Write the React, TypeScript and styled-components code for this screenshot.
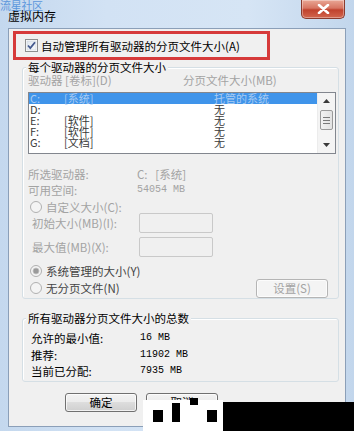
import React from 'react';
import styled, { createGlobalStyle } from 'styled-components';

const GlobalStyle = createGlobalStyle`
  html, body {
    margin: 0;
    padding: 0;
    background: #ffffff;
  }
  body {
    font-family: "Noto Sans CJK SC", "Liberation Sans", sans-serif;
    font-size: 11.5px;
    color: #000;
  }
`;

const Window = styled.div`
  position: relative;
  width: 354px;
  height: 431px;
  box-sizing: border-box;
  padding: 0 8px 4px 8px;
  background: linear-gradient(90deg, #c4d8ee 0%, #d2e2f4 30%, #d6e5f5 70%, #c2d6ec 100%);
  display: flex;
  flex-direction: column;
  overflow: hidden;
`;

const TitleBar = styled.div`
  height: 28px;
  flex: none;
  display: flex;
  justify-content: space-between;
  align-items: flex-start;
`;

const Title = styled.div`
  font-size: 12px;
  line-height: 14px;
  padding-top: 9px;
  color: #000;
`;

const CloseButton = styled.div`
  width: 44px;
  height: 19px;
  margin-right: 1px;
  box-sizing: border-box;
  border: 1px solid #8a3b2e;
  border-top: none;
  border-radius: 0 0 5px 5px;
  background: linear-gradient(180deg, #e9a795 0%, #d77562 45%, #c0422d 55%, #d2664e 100%);
  display: flex;
  align-items: center;
  justify-content: center;
  box-shadow: inset 0 0 0 1px rgba(255, 255, 255, 0.35);
`;

const Watermark = styled.div`
  position: absolute;
  left: 0;
  top: 0;
  font-size: 11px;
  line-height: 10px;
  color: #3f86d8;
  opacity: 0.8;
  letter-spacing: -0.3px;
`;

const Client = styled.div`
  flex: 1;
  min-height: 0;
  background: #f0f0f0;
  border: 1px solid #8b9fb8;
  display: flex;
  flex-direction: column;
`;

const Highlight = styled.div`
  margin: 2px 0 0 4px;
  width: 257px;
  height: 29px;
  box-sizing: border-box;
  border: 3px solid #d63a3a;
  display: flex;
  align-items: center;
  gap: 3px;
  padding-left: 9px;
  line-height: 14px;
`;

const Group = styled.div<{ $top: number }>`
  margin: ${p => p.$top}px 6px 0 13px;
  border: 1px solid #d5dfe5;
  border-radius: 3px;
  box-shadow: inset 1px 1px 0 #ffffff;
  display: flex;
  flex-direction: column;
  padding: 0 0 1px 5px;
`;

const GroupTitle = styled.div`
  align-self: flex-start;
  margin: -7px 0 0 -2px;
  padding: 0 2px;
  line-height: 12px;
  background: #f0f0f0;
  color: #000;
`;

const Columns = styled.div<{ $first: number; $height: number }>`
  display: grid;
  grid-template-columns: ${p => p.$first}px auto;
  line-height: ${p => p.$height}px;
`;

const Dim = styled.span`
  color: #a3a3a3;
`;

const Mono = styled.span<{ $dim?: boolean }>`
  font-family: "Liberation Mono", "Noto Sans CJK SC", monospace;
  font-size: 10px;
  color: ${p => (p.$dim ? '#a3a3a3' : '#000')};
`;

const ListBox = styled.div`
  margin-top: 5px;
  width: 308px;
  height: 62px;
  box-sizing: border-box;
  border: 1px solid #82868e;
  background: #ffffff;
  display: flex;
`;

const Rows = styled.div`
  flex: 1;
`;

const Row = styled.div<{ $selected?: boolean }>`
  display: grid;
  grid-template-columns: 34px 150px 1fr;
  height: 11px;
  line-height: 11px;
  font-size: 11px;
  padding-left: 1px;
  background: ${p => (p.$selected ? '#3f94ea' : 'transparent')};
  color: ${p => (p.$selected ? '#a9cbf2' : '#3a3a3a')};
`;

const ScrollBar = styled.div`
  width: 17px;
  display: flex;
  flex-direction: column;
  align-items: center;
  background: #f4f4f4;
  border-left: 1px solid #ececec;
`;

const Arrow = styled.div`
  height: 16px;
  display: flex;
  align-items: center;
  justify-content: center;
`;

const Thumb = styled.div`
  width: 13px;
  height: 20px;
  margin-top: 1px;
  box-sizing: border-box;
  border: 1px solid #9a9a9a;
  border-radius: 2px;
  background: linear-gradient(90deg, #f2f2f2, #e2e2e2);
  display: flex;
  flex-direction: column;
  align-items: center;
  justify-content: center;
  gap: 2px;
`;

const Grip = styled.div`
  width: 7px;
  height: 1px;
  background: #7a7a7a;
`;

const Spacer = styled.div`
  flex: 1;
`;

const Info = styled(Columns)`
  margin-top: 12px;
  color: #a3a3a3;
`;

const RadioRow = styled.div<{ $top: number; $height: number; $dim?: boolean }>`
  margin-top: ${p => p.$top}px;
  height: ${p => p.$height}px;
  display: flex;
  align-items: center;
  gap: 4px;
  padding-left: 2px;
  color: ${p => (p.$dim ? '#a3a3a3' : '#444')};
`;

const FieldRow = styled.div<{ $top: number }>`
  margin-top: ${p => p.$top}px;
  height: 20px;
  display: flex;
  align-items: center;
  padding-left: 4px;
  color: #a3a3a3;
`;

const FieldLabel = styled.div`
  width: 107px;
`;

const Field = styled.div`
  width: 74px;
  height: 20px;
  box-sizing: border-box;
  border: 1px solid #c9c9c9;
  border-radius: 2px;
  background: #f0f0f0;
`;

const LastRow = styled.div`
  height: 18px;
  display: flex;
  align-items: center;
  justify-content: space-between;
  padding: 0 10px 0 2px;
  color: #444;
`;

const RadioLabel = styled.div`
  display: flex;
  align-items: center;
  gap: 4px;
`;

const Button = styled.div<{ $disabled?: boolean }>`
  width: 72px;
  height: 19px;
  box-sizing: border-box;
  border: 1px solid ${p => (p.$disabled ? '#b5b5b5' : '#707070')};
  border-radius: 3px;
  background: ${p =>
    p.$disabled
      ? '#f4f4f4'
      : 'linear-gradient(180deg, #f3f3f3 0%, #ebebeb 49%, #dddddd 50%, #cfcfcf 100%)'};
  box-shadow: inset 0 0 0 1px rgba(255, 255, 255, 0.7);
  display: flex;
  align-items: center;
  justify-content: center;
  line-height: 14px;
  color: ${p => (p.$disabled ? '#a3a3a3' : '#000')};
`;

const TotalRows = styled(Columns)`
  margin-top: 6px;
  padding-left: 3px;
`;

const ButtonBar = styled.div`
  margin: 11px 0 0 56px;
  display: flex;
  gap: 9px;
`;

const Redaction = styled.div<{ $l: number; $t: number; $w: number; $h: number; $c: string }>`
  position: absolute;
  left: ${p => p.$l}px;
  top: ${p => p.$t}px;
  width: ${p => p.$w}px;
  height: ${p => p.$h}px;
  background: ${p => p.$c};
`;

const CheckBox = () => (
  <svg width="13" height="13" viewBox="0 0 13 13">
    <defs>
      <linearGradient id="cb" x1="0" y1="0" x2="1" y2="1">
        <stop offset="0" stopColor="#dfe6ee" />
        <stop offset="1" stopColor="#f7f9fb" />
      </linearGradient>
    </defs>
    <rect x="0.5" y="0.5" width="12" height="12" fill="#fff" stroke="#8e8f8f" />
    <rect x="2" y="2" width="9" height="9" fill="url(#cb)" stroke="#c8d0d9" strokeWidth="0.6" />
    <path d="M3 6.5 L5.3 9 L10 3.2" fill="none" stroke="#44598e" strokeWidth="1.8" />
  </svg>
);

const Radio = ({ checked }: { checked?: boolean }) => (
  <svg width="12" height="12" viewBox="0 0 12 12">
    <circle cx="6" cy="6" r="5.5" fill="#f4f4f4" stroke="#b0b0b0" />
    {checked && <circle cx="6" cy="6" r="3" fill="#9a9a9a" stroke="#c4c4c4" strokeWidth="0.8" />}
  </svg>
);

const Tri = ({ up }: { up?: boolean }) => (
  <svg width="7" height="4" viewBox="0 0 7 4">
    <path d={up ? 'M0 4 L3.5 0 L7 4 Z' : 'M0 0 L3.5 4 L7 0 Z'} fill="#3a3a3a" />
  </svg>
);

const drives = [
  { d: 'C:', label: '[系统]', size: '托管的系统', selected: true },
  { d: 'D:', label: '', size: '无' },
  { d: 'E:', label: '[软件]', size: '无' },
  { d: 'F:', label: '[软件]', size: '无' },
  { d: 'G:', label: '[文档]', size: '无' },
];

export default function App() {
  return (
    <Window>
      <GlobalStyle />
      <TitleBar>
        <Title>虚拟内存</Title>
        <CloseButton>
          <svg width="13" height="10" viewBox="0 0 13 10">
            <path d="M2 1 L11 9 M11 1 L2 9" stroke="#fff" strokeWidth="2.6" strokeLinecap="round" />
          </svg>
        </CloseButton>
      </TitleBar>
      <Client>
        <Highlight>
          <CheckBox />
          <span>自动管理所有驱动器的分页文件大小(A)</span>
        </Highlight>

        <Group $top={7}>
          <GroupTitle>每个驱动器的分页文件大小</GroupTitle>
          <Columns $first={155} $height={14}>
            <Dim>驱动器 [卷标](D)</Dim>
            <Dim>分页文件大小(MB)</Dim>
          </Columns>
          <ListBox>
            <Rows>
              {drives.map(r => (
                <Row key={r.d} $selected={r.selected}>
                  <span>{r.d}</span>
                  <span>{r.label}</span>
                  <span>{r.size}</span>
                </Row>
              ))}
            </Rows>
            <ScrollBar>
              <Arrow>
                <Tri up />
              </Arrow>
              <Thumb>
                <Grip />
                <Grip />
                <Grip />
              </Thumb>
              <Spacer />
              <Arrow>
                <Tri />
              </Arrow>
            </ScrollBar>
          </ListBox>
          <Info $first={109} $height={16}>
            <span>所选驱动器:</span>
            <span>C:{'\u00a0\u00a0\u00a0'}[系统]</span>
            <span>可用空间:</span>
            <Mono $dim>54054 MB</Mono>
          </Info>
          <RadioRow $top={2} $height={13} $dim>
            <Radio />
            <span>自定义大小(C):</span>
          </RadioRow>
          <FieldRow $top={0}>
            <FieldLabel>初始大小(MB)(I):</FieldLabel>
            <Field />
          </FieldRow>
          <FieldRow $top={4}>
            <FieldLabel>最大值(MB)(X):</FieldLabel>
            <Field />
          </FieldRow>
          <RadioRow $top={6} $height={16}>
            <Radio checked />
            <span>系统管理的大小(Y)</span>
          </RadioRow>
          <LastRow>
            <RadioLabel>
              <Radio />
              <span>无分页文件(N)</span>
            </RadioLabel>
            <Button $disabled>设置(S)</Button>
          </LastRow>
        </Group>

        <Group $top={19}>
          <GroupTitle>所有驱动器分页文件大小的总数</GroupTitle>
          <TotalRows $first={109} $height={16.5}>
            <span>允许的最小值:</span>
            <Mono>16 MB</Mono>
            <span>推荐:</span>
            <Mono>11902 MB</Mono>
            <span>当前已分配:</span>
            <Mono>7935 MB</Mono>
          </TotalRows>
        </Group>

        <ButtonBar>
          <Button>确定</Button>
          <Button>取消</Button>
        </ButtonBar>
      </Client>

      <Watermark>流星社区</Watermark>
      <Redaction $l={143} $t={400} $w={80} $h={31} $c="#ffffff" />
      <Redaction $l={223} $t={402} $w={131} $h={29} $c="#000000" />
      <Redaction $l={153} $t={410} $w={10} $h={12} $c="#000000" />
      <Redaction $l={172} $t={403} $w={8} $h={19} $c="#000000" />
      <Redaction $l={190} $t={398} $w={8} $h={7} $c="#000000" />
      <Redaction $l={207} $t={410} $w={10} $h={12} $c="#000000" />
    </Window>
  );
}
